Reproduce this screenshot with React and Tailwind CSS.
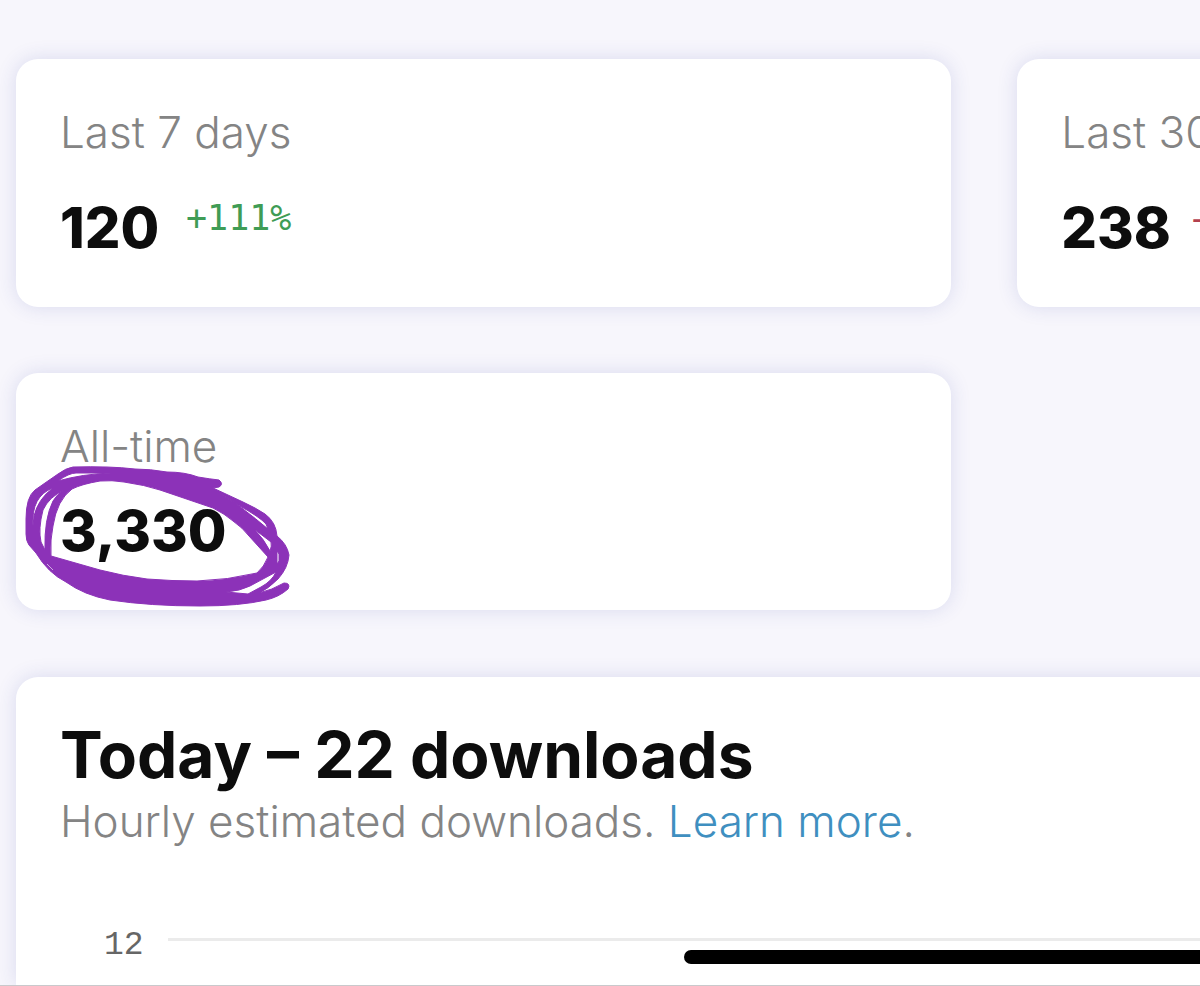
const stats = [
  { label: 'Last 7 days', value: '120', change: '+111%', color: 'text-[#3f9c55]' },
  { label: 'Last 30 days', value: '238', change: '-12%', color: 'text-[#b3414f]' },
  { label: 'All-time', value: '3,330', circled: true }
];

const cardStyle = 'bg-white rounded-[22px] shadow-[0_0_20px_rgba(50,60,160,0.15)]';

// Hand-drawn marker ring, sits over the all-time number
const Scribble = () => (
  <svg
    className="absolute left-2 top-[86px] pointer-events-none"
    width="272"
    height="156"
    viewBox="24 460 272 156"
    fill="#8c32b8"
    fillRule="evenodd"
    stroke="#8c32b8"
    strokeWidth="1"
    strokeLinejoin="round"
    aria-hidden="true"
  >
    <path
      d="M73 468Q110 467 135 470Q150 470 167 473Q185 473 198 478Q210 480 219 481Q224 485 219 488L213 489L243 503Q256 509 265 515Q276 523 277 537Q287 545 289 556Q288 569 278 580Q268 590 259 594Q272 591 284 584Q291 584 288 590Q279 598 266 601Q240 607 200 607Q150 607 110 601Q84 596 66 583Q48 574 36 554L29 546Q26 542 26 535V520Q26 498 35 491L45 484L58 475Q66 469 73 468Z
      M51 557Q50 540 53 527Q57 501 72 490Q82 485 100 482Q112 481 124 483Q145 486 160 491L213 509Q225 515 233 522Q243 529 249 537L268 558Q264 568 257 574Q228 581 197 582Q172 582 147 580Q123 577 100 571Z
      M64 491Q49 498 43 511Q38 530 41 543L45 551Q44 520 53 502Q57 495 64 491Z
      M33 527Q31 497 53 489Q38 500 34 517Z
      M58 482Q69 474 76 474H111Q82 475 58 482Z
      M219 494L238 506Q260 518 266 525L268 530Q255 519 243 510Q230 500 219 494Z
      M254 530L271 543Q272 547 270 552Q264 540 254 530Z
      M277 552L279 555V562L277 565Z
      M226 593Q240 592 250 587L276 573Q272 582 261 588L248 595Z"
    />
    <path d="M47 565L53 571" stroke="#ffffff" opacity="0.6" />
  </svg>
);

const StatCard = ({ stat }) => (
  <div className={`${cardStyle} relative px-11 pt-[43px] pb-[45px]`}>
    <p className="text-[44px] leading-[60px] font-light text-[#848484]">{stat.label}</p>
    <div className="mt-[22px] flex items-end gap-4">
      <p className="min-w-[110px] text-[56px] leading-[67px] font-extrabold text-[#0d0d0d]">{stat.value}</p>
      {stat.change && (
        <span className={`pb-[10px] font-['DejaVu_Sans_Mono',monospace] text-[35px] leading-[68px] ${stat.color}`}>
          {stat.change}
        </span>
      )}
    </div>
    {stat.circled && <Scribble />}
  </div>
);

const App = () => {
  return (
    <div className="flex min-h-screen flex-col overflow-hidden border-b border-[#c9c9cc] bg-[#f7f6fc] pl-4 pt-[59px] font-[Inter,sans-serif]">
      {/* Stats Grid */}
      <div className="grid grid-cols-[79%_79%] gap-[66px]">
        {stats.map((stat) => (
          <StatCard key={stat.label} stat={stat} />
        ))}
      </div>

      {/* Hourly downloads */}
      <section className={`${cardStyle} relative mt-[67px] -mr-8 flex-1 rounded-b-none pl-11 pt-[42px]`}>
        <h2 className="text-[64px] leading-[72px] font-bold text-[#0d0d0d]">Today – 22 downloads</h2>
        <p className="text-[44px] leading-[60px] font-light text-[#848484]">
          Hourly estimated downloads. <a href="#learn-more" className="text-[#3f8fc0]">Learn more</a>.
        </p>
        <div className="mt-[70px] flex items-start pl-11">
          <span className="font-['Liberation_Mono',monospace] text-[33px] leading-[50px] text-[#666]">12</span>
          <div className="ml-6 mt-[17px] h-[3px] flex-1 bg-[#ebebeb]" />
        </div>
      </section>

      {/* Home indicator */}
      <div className="fixed bottom-[22px] left-[57%] right-0 h-[14px] rounded-l-full bg-black" />
    </div>
  );
};

export default App;
